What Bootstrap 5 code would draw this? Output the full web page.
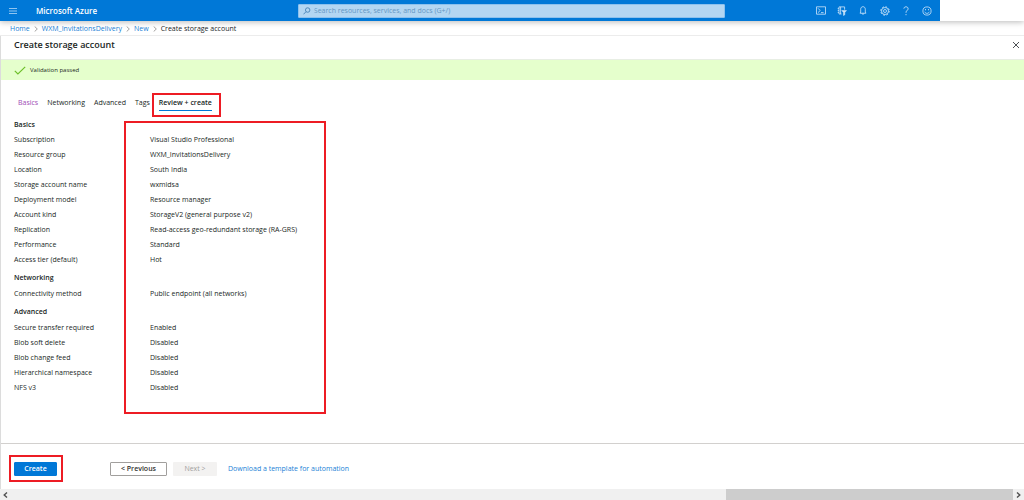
<!DOCTYPE html>
<html lang="en">
<head>
<meta charset="utf-8">
<meta name="viewport" content="width=device-width, initial-scale=1">
<title>Create storage account - Microsoft Azure</title>
<link href="https://cdn.jsdelivr.net/npm/bootstrap@5.3.0/dist/css/bootstrap.min.css" rel="stylesheet">
<style>
body{font-family:"Open Sans","Noto Sans",sans-serif;font-size:7px;line-height:15px;color:#201f1e;background:#fff}
a{color:#1a7fd6;text-decoration:none}
.az-top{height:21px;box-shadow:0 1px 6px rgba(0,0,0,.28);position:relative;z-index:1}
.az-bar{background:#0078d7;color:#fff}
.az-blank{width:84px}
.az-left{width:298px;padding-left:8px;gap:18px}
.az-brand{font-size:8px;font-weight:600;color:#fff}
.az-icon{background:none;border:0;padding:0;color:#cfe6fa;display:flex;align-items:center;justify-content:center;width:10px;height:14px}
.az-search{height:14px;background:#b3d6f2;border:1px solid #8cc1ee;border-radius:1px;color:#4580b5;padding-left:4px;gap:3px}
.az-search input{font-size:7px;line-height:12px;height:12px;min-height:0;padding:0;background:none;border:0;color:#4580b5}
.az-search input:focus{background:none;box-shadow:none}
.az-search input::placeholder{color:#6596c4;opacity:1}
.az-tools{width:215px;padding:0 8px 0 91px}
.az-crumbs{height:15px;padding:0 10px;border-bottom:1px solid #ececec;font-size:7px}
.az-crumbs .breadcrumb-item{display:flex;align-items:center;padding:0}
.az-crumbs .breadcrumb-item::before{display:none}
.az-crumbs svg{margin:0 4px;color:#8a8886}
.az-blade{border-left:1px solid #dcdcdc}
.az-title{height:23px;padding:0 3px 5px 13px}
.az-title h1{font-size:9px;line-height:18px;font-weight:600;color:#201f1e}
.az-valid{height:21px;border-top:1px solid #e8eee4;background:#e5ffcc;padding-left:13px;gap:4px;font-size:6px}
.az-tabs{padding:15px 17px 0;gap:9px}
.az-tabs .nav-link{padding:0;font-size:7px;line-height:15px;color:#201f1e;position:relative;border-bottom:1px solid transparent;transition:none}
.az-tabs .nav-link.visited{color:#a04db5}
.az-tabs .nav-link.active{font-weight:600;border-bottom-color:#0078d7}
.az-tabs .active::after{content:"";position:absolute;inset:-2px -9px -7px -7px;border:2px solid #ed1c24}
.az-details{padding:5px 13px 0;position:relative}
.az-details table{width:100%;table-layout:fixed}
.az-labels{width:136px}
.az-details td,.az-details th{padding:0;font-weight:400;height:15px}
.az-details .az-group{font-weight:600;height:16px}
.az-details tbody+tbody .az-group{height:19px;padding-top:2px}
.az-frame{position:absolute;left:123px;width:202px;top:10px;bottom:-19px;border:2px solid #ed1c24;pointer-events:none}
.az-foot{height:46px;border-top:1px solid #d2d0ce;padding:4px 0 0 13px}
.az-foot .btn{font-size:7px;line-height:12px;height:14px;padding:0;border-radius:1px}
.az-foot .az-create{width:43px;background:#0078d7;color:#fff;border:1px solid #0078d7;font-weight:600;position:relative;margin-right:53px}
.az-create::after{content:"";position:absolute;inset:-8px -7px -7px -6px;border:2px solid #ed1c24}
.az-foot .az-prev{width:57px;border:1px solid #a19f9d;color:#323130;font-weight:600;margin-right:6px}
.az-foot .az-next:disabled{width:44px;background:#f3f2f1;color:#a19f9d;border:0;opacity:1;margin-right:11px}
.az-scroll{height:11px;background:#f0f0f0;color:#505050}
.az-scroll span{width:11px;display:flex;justify-content:center}
.az-thumb{width:28%;background:#cdcdcd}
</style>
</head>
<body>
<div class="d-flex flex-column min-vh-100">
<header class="az-top d-flex bg-white">
  <div class="az-bar d-flex align-items-center flex-grow-1">
    <div class="az-left d-flex align-items-center flex-shrink-0">
      <button class="az-icon" type="button" aria-label="Menu"><svg width="8" height="8" viewBox="0 0 8 8" stroke="currentColor"><path d="M0 1.5h8M0 4h8M0 6.5h8" stroke-width=".7"/></svg></button>
      <a class="az-brand" href="#">Microsoft Azure</a>
    </div>
    <div class="az-search d-flex align-items-center flex-grow-1">
      <svg width="8" height="8" viewBox="0 0 8 8" fill="none" stroke="currentColor" stroke-width=".9"><circle cx="4.8" cy="3" r="2.3"/><path d="M3.1 4.7.5 7.4"/></svg>
      <input class="form-control" type="text" aria-label="Search" placeholder="Search resources, services, and docs (G+/)">
    </div>
    <div class="az-tools d-flex align-items-center justify-content-between flex-shrink-0">
      <button class="az-icon" type="button" aria-label="Cloud Shell"><svg width="10" height="9" viewBox="0 0 10 9" fill="none" stroke="currentColor" stroke-width=".8"><path d="M.5.8h9v7.4h-9zM2 2.3l2.2 2.2L2 6.6M5 6.6h2.6"/></svg></button>
      <button class="az-icon" type="button" aria-label="Directory and subscription"><svg width="10" height="10" viewBox="0 0 10 10" fill="none" stroke="currentColor" stroke-width=".8"><path d="M4.5 8H2V.9h5.6v2.8M3.6.9V8M.7 2.4H2M.7 4.4H2M.7 6.4H2"/><path d="M4.7 4.5h4.8L7.8 6.6v2.2l-1.3.8v-3z" fill="currentColor" stroke-width=".5"/></svg></button>
      <button class="az-icon" type="button" aria-label="Notifications"><svg width="8" height="9" viewBox="0 0 8 9" fill="none" stroke="currentColor" stroke-width=".8"><path d="M1 7.2h6L6.3 6V3.2C6.3 1.6 5.3.7 4 .7S1.7 1.6 1.7 3.2V6zM3 7.3c0 1.4 2 1.4 2 0"/></svg></button>
      <button class="az-icon" type="button" aria-label="Settings"><svg width="10" height="10" viewBox="0 0 10 10" fill="none" stroke="currentColor"><circle cx="5" cy="5" r="3.5" stroke-width=".8"/><circle cx="5" cy="5" r="4.2" stroke-width="1" stroke-dasharray="1.65 1.65"/><circle cx="5" cy="5" r="1.5" stroke-width=".8"/></svg></button>
      <button class="az-icon" type="button" aria-label="Help"><svg width="6" height="10" viewBox="0 0 6 10" fill="none" stroke="currentColor" stroke-width=".9"><path d="M.9 2.6C1 .2 5.1.2 5.1 2.7 5.1 4.4 3 4.5 3 6.7M3 8.1v1.1"/></svg></button>
      <button class="az-icon" type="button" aria-label="Feedback"><svg width="10" height="10" viewBox="0 0 10 10" fill="none" stroke="currentColor" stroke-width=".8"><circle cx="5" cy="5" r="4.1"/><path d="M2.7 5.8c.8 2.1 3.8 2.1 4.6 0M3.5 3v1.3M6.5 3v1.3"/></svg></button>
    </div>
  </div>
  <div class="az-blank flex-shrink-0"></div>
</header>

<nav aria-label="breadcrumb">
  <ol class="az-crumbs breadcrumb mb-0 align-items-center">
    <li class="breadcrumb-item"><a href="#">Home</a><svg width="4" height="6" viewBox="0 0 4 6" fill="none" stroke="currentColor" stroke-width=".8"><path d="m.7.5 2.6 2.5L.7 5.5"/></svg></li>
    <li class="breadcrumb-item"><a href="#">WXM_InvitationsDelivery</a><svg width="4" height="6" viewBox="0 0 4 6" fill="none" stroke="currentColor" stroke-width=".8"><path d="m.7.5 2.6 2.5L.7 5.5"/></svg></li>
    <li class="breadcrumb-item"><a href="#">New</a><svg width="4" height="6" viewBox="0 0 4 6" fill="none" stroke="currentColor" stroke-width=".8"><path d="m.7.5 2.6 2.5L.7 5.5"/></svg></li>
    <li class="breadcrumb-item text-dark" aria-current="page">Create storage account</li>
  </ol>
</nav>

<main class="az-blade d-flex flex-column flex-grow-1">
  <div class="az-title d-flex align-items-center justify-content-between">
    <h1 class="mb-0">Create storage account</h1>
    <button class="az-icon text-dark" type="button" aria-label="Close"><svg width="8" height="8" viewBox="0 0 8 8" stroke="currentColor" stroke-width=".8"><path d="m1 1 6 6M7 1 1 7"/></svg></button>
  </div>
  <div class="az-valid d-flex align-items-center" role="status">
    <svg width="12" height="9" viewBox="0 0 12 9" fill="none" stroke="#6cbf28" stroke-width="1.2"><path d="m.8 4.8 3.1 3.1L11.2.9"/></svg>
    <span>Validation passed</span>
  </div>
  <nav class="az-tabs nav">
    <a class="nav-link visited" href="#">Basics</a>
    <a class="nav-link" href="#">Networking</a>
    <a class="nav-link" href="#">Advanced</a>
    <a class="nav-link" href="#">Tags</a>
    <a class="nav-link active" href="#" aria-current="page">Review + create</a>
  </nav>
  <section class="az-details">
    <table>
      <colgroup><col class="az-labels"><col></colgroup>
      <tbody>
        <tr><th class="az-group" colspan="2" scope="rowgroup">Basics</th></tr>
        <tr><th scope="row">Subscription</th><td>Visual Studio Professional</td></tr>
        <tr><th scope="row">Resource group</th><td>WXM_InvitationsDelivery</td></tr>
        <tr><th scope="row">Location</th><td>South India</td></tr>
        <tr><th scope="row">Storage account name</th><td>wxmidsa</td></tr>
        <tr><th scope="row">Deployment model</th><td>Resource manager</td></tr>
        <tr><th scope="row">Account kind</th><td>StorageV2 (general purpose v2)</td></tr>
        <tr><th scope="row">Replication</th><td>Read-access geo-redundant storage (RA-GRS)</td></tr>
        <tr><th scope="row">Performance</th><td>Standard</td></tr>
        <tr><th scope="row">Access tier (default)</th><td>Hot</td></tr>
      </tbody>
      <tbody>
        <tr><th class="az-group" colspan="2" scope="rowgroup">Networking</th></tr>
        <tr><th scope="row">Connectivity method</th><td>Public endpoint (all networks)</td></tr>
      </tbody>
      <tbody>
        <tr><th class="az-group" colspan="2" scope="rowgroup">Advanced</th></tr>
        <tr><th scope="row">Secure transfer required</th><td>Enabled</td></tr>
        <tr><th scope="row">Blob soft delete</th><td>Disabled</td></tr>
        <tr><th scope="row">Blob change feed</th><td>Disabled</td></tr>
        <tr><th scope="row">Hierarchical namespace</th><td>Disabled</td></tr>
        <tr><th scope="row">NFS v3</th><td>Disabled</td></tr>
      </tbody>
    </table>
    <div class="az-frame"></div>
  </section>
  <footer class="az-foot d-flex align-items-center mt-auto">
    <button class="btn az-create" type="button">Create</button>
    <button class="btn az-prev" type="button">&lt; Previous</button>
    <button class="btn az-next" type="button" disabled>Next &gt;</button>
    <a href="#">Download a template for automation</a>
  </footer>
</main>
<div class="az-scroll d-flex align-items-center" aria-hidden="true">
  <span><svg width="5" height="6" viewBox="0 0 5 6" fill="none" stroke="currentColor" stroke-width="1.4"><path d="M4 .5 1.2 3 4 5.5"/></svg></span>
  <div class="flex-grow-1"></div>
  <div class="az-thumb h-100"></div>
  <span><svg width="5" height="6" viewBox="0 0 5 6" fill="none" stroke="currentColor" stroke-width="1.4"><path d="M1 .5 3.8 3 1 5.5"/></svg></span>
</div>
</div>
<script src="https://cdn.jsdelivr.net/npm/bootstrap@5.3.0/dist/js/bootstrap.bundle.min.js"></script>
</body>
</html>
